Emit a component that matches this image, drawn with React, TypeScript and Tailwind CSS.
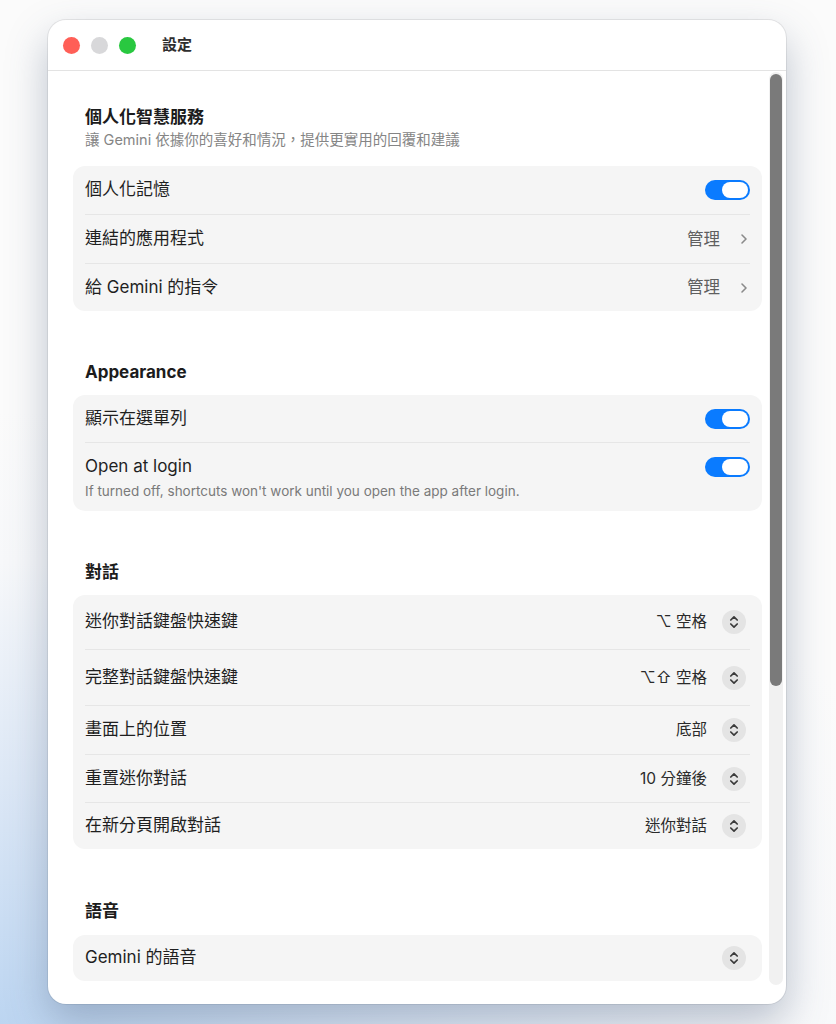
import React from "react";

const FONT = 'Inter, "Noto Sans CJK TC", "Noto Sans", sans-serif';

function Toggle() {
  return (
    <div className="w-[45px] h-[20px] rounded-full bg-[#0a7bff] flex items-center justify-end pr-[2px]">
      <div className="w-[26px] h-[16px] rounded-full bg-white" />
    </div>
  );
}

function Chevron() {
  return (
    <svg width="8" height="12" viewBox="0 0 8 12" fill="none">
      <path d="M2 2 L6 6 L2 10" stroke="#8a8a8a" strokeWidth="1.6" strokeLinecap="round" strokeLinejoin="round" />
    </svg>
  );
}

function Stepper() {
  return (
    <div className="w-[24px] h-[24px] rounded-full bg-[#e4e4e4] flex items-center justify-center">
      <svg width="24" height="24" viewBox="0 0 24 24" fill="none">
        <path d="M8.8 10 L12 6.8 L15.2 10" stroke="#3a3a3a" strokeWidth="1.7" strokeLinecap="round" strokeLinejoin="round" />
        <path d="M8.8 14 L12 17.2 L15.2 14" stroke="#3a3a3a" strokeWidth="1.7" strokeLinecap="round" strokeLinejoin="round" />
      </svg>
    </div>
  );
}

function Divider() {
  return <div className="mx-[12px] h-px bg-[#e6e6e6]" />;
}

function Row({ label, right, h = "h-[48px]", pr = "pr-[12px]" }: { label: React.ReactNode; right?: React.ReactNode; h?: string; pr?: string }) {
  return (
    <div className={`flex items-center justify-between pl-[12px] ${pr} ${h}`}>
      <span className="text-[17px] text-[#1f1f1f]">{label}</span>
      {right}
    </div>
  );
}

function ManageRight() {
  return (
    <div className="flex items-center gap-[20px] pr-[2px]">
      <span className="text-[16.5px] text-[#5f5f5f]">管理</span>
      <Chevron />
    </div>
  );
}

function StepRight({ value }: { value?: string }) {
  return (
    <div className="flex items-center gap-[15px]">
      {value && <span className="text-[15.5px] text-[#2a2a2a]">{value}</span>}
      <Stepper />
    </div>
  );
}

function Heading({ children, className = "" }: { children: React.ReactNode; className?: string }) {
  return <div className={`px-[12px] text-[17px] leading-[24px] font-bold text-[#1c1c1c] ${className}`}>{children}</div>;
}

function Card({ children, className = "" }: { children: React.ReactNode; className?: string }) {
  return <div className={`rounded-[12px] bg-[#f5f5f5] ${className}`}>{children}</div>;
}

export default function App() {
  return (
    <div
      className="w-[836px] h-[1024px] overflow-hidden bg-[radial-gradient(ellipse_120%_60%_at_0%_100%,#bcd5f1_0%,#dde8f6_40%,#f7f8fa_75%,#fbfbfb_100%)] pt-[20px] pl-[48px]"
      style={{ fontFamily: FONT }}
    >
      <div className="relative w-[738px] h-[984px] rounded-[18px] bg-white shadow-[0_18px_40px_rgba(70,90,120,0.35),0_0_0_1px_rgba(0,0,0,0.08)] overflow-hidden flex flex-col">
        {/* title bar */}
        <div className="h-[51px] shrink-0 border-b border-[#e3e3e3] flex items-center pl-[15px]">
          <div className="flex items-center gap-[11px]">
            <div className="w-[17px] h-[17px] rounded-full bg-[#ff5f57]" />
            <div className="w-[17px] h-[17px] rounded-full bg-[#d8d8da]" />
            <div className="w-[17px] h-[17px] rounded-full bg-[#29c840]" />
          </div>
          <span className="ml-[26px] text-[15px] font-semibold text-[#2e2e2e]">設定</span>
        </div>

        {/* content */}
        <div className="flex-1 px-[25px] pr-[24px] pt-[34px]">
          <Heading>個人化智慧服務</Heading>
          <div className="px-[12px] text-[14.5px] leading-[20px] text-[#858585] mt-[1px]">
            讓 Gemini 依據你的喜好和情況，提供更實用的回覆和建議
          </div>
          <Card className="mt-[16px]">
            <Row label="個人化記憶" right={<Toggle />} />
            <Divider />
            <Row label="連結的應用程式" right={<ManageRight />} />
            <Divider />
            <Row label="給 Gemini 的指令" right={<ManageRight />} h="h-[47px]" />
          </Card>

          <Heading className="mt-[49px]">Appearance</Heading>
          <Card className="mt-[11px]">
            <Row label="顯示在選單列" right={<Toggle />} h="h-[47px]" />
            <Divider />
            <div className="pl-[12px] pr-[12px] pt-[12px] pb-[10px]">
              <div className="flex items-center justify-between h-[24px]">
                <span className="text-[17px] text-[#1f1f1f]">Open at login</span>
                <Toggle />
              </div>
              <div className="text-[13.5px] leading-[20px] text-[#7a7a7a] mt-[2px]">
                If turned off, shortcuts won't work until you open the app after login.
              </div>
            </div>
          </Card>

          <Heading className="mt-[49px]">對話</Heading>
          <Card className="mt-[11px]">
            <Row label="迷你對話鍵盤快速鍵" right={<StepRight value="⌥ 空格" />} h="h-[54px]" pr="pr-[16px]" />
            <Divider />
            <Row label="完整對話鍵盤快速鍵" right={<StepRight value="⌥⇧ 空格" />} h="h-[55px]" pr="pr-[16px]" />
            <Divider />
            <Row label="畫面上的位置" right={<StepRight value="底部" />} h="h-[48px]" pr="pr-[16px]" />
            <Divider />
            <Row label="重置迷你對話" right={<StepRight value="10 分鐘後" />} h="h-[47px]" pr="pr-[16px]" />
            <Divider />
            <Row label="在新分頁開啟對話" right={<StepRight value="迷你對話" />} h="h-[46px]" pr="pr-[16px]" />
          </Card>

          <Heading className="mt-[50px]">語音</Heading>
          <Card className="mt-[12px]">
            <Row label="Gemini 的語音" right={<StepRight />} h="h-[46px]" pr="pr-[16px]" />
          </Card>
        </div>

        {/* scrollbar overlay */}
        <div className="absolute left-[721px] top-[52px] w-[14px] h-[913px] rounded-full bg-[#f1f1f1]">
          <div className="mx-auto mt-[2px] w-[12px] h-[612px] rounded-full bg-[#7a7a7a]" />
        </div>
      </div>
    </div>
  );
}
